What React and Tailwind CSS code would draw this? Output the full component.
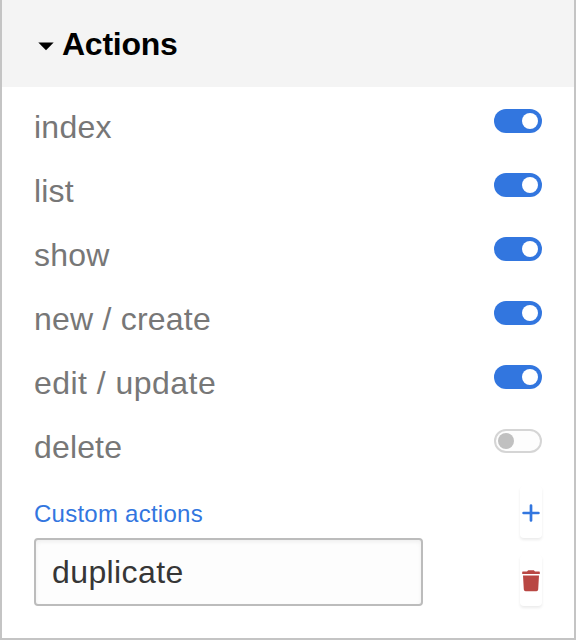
const actions = [
  { name: "index", on: true, track: "tracking-[0.25px]" },
  { name: "list", on: true, track: "tracking-[0.2px]" },
  { name: "show", on: true, track: "tracking-[0.25px]" },
  { name: "new / create", on: true, track: "tracking-[0.22px]" },
  { name: "edit / update", on: true, track: "tracking-[0.47px]" },
  { name: "delete", on: false, track: "tracking-[0.15px]" },
];

function Toggle({ on }) {
  return on ? (
    <span role="switch" aria-checked="true" className="mt-[14px] flex h-6 w-12 items-center justify-end rounded-full bg-[#3276df] pr-1">
      <span className="h-4 w-4 rounded-full bg-white" />
    </span>
  ) : (
    <span role="switch" aria-checked="false" className="mt-[14px] flex h-6 w-12 items-center rounded-full border-2 border-[#d5d5d5] bg-[#fdfdfd] pl-[2px]">
      <span className="h-4 w-4 rounded-full bg-[#c0c0c0]" />
    </span>
  );
}

export default function App() {
  return (
    <main className="flex h-[640px] w-[576px] flex-col border-x-2 border-b-2 border-[#c4c4c4] bg-white font-['Liberation_Sans',Arial,sans-serif]">
      <header className="flex h-[87px] items-center bg-[#f4f4f4] pl-9 text-black">
        <svg className="mt-[5px] h-[9px] w-4" viewBox="0 0 16 9" fill="currentColor" aria-hidden="true">
          <path d="M0.3 0.4h15.4L8 8.3z" />
        </svg>
        <h1 className="ml-2 text-[32px] leading-9 font-bold tracking-[-0.25px]">Actions</h1>
      </header>
      <ul className="px-8 pt-2">
        {actions.map(({ name, on, track }) => (
          <li key={name} className="flex h-16 items-start justify-between">
            <span className={"text-[32px] leading-[64px] text-[#777777] " + track}>{name}</span>
            <Toggle on={on} />
          </li>
        ))}
      </ul>
      <section className="flex flex-col px-8 pt-[7px]">
        <div className="flex h-[52px] items-start justify-between">
          <h2 className="mt-[14px] text-2xl leading-7 tracking-[0.25px] text-[#3276df]">Custom actions</h2>
          <button aria-label="Add" className="flex h-[52px] w-[22px] items-center justify-center rounded-[4px] bg-white pt-px shadow-[0_2px_3px_rgba(0,0,0,0.08)]">
            <svg className="h-[18px] w-[18px]" viewBox="0 0 18 18" stroke="#3276df" strokeWidth="2.7" strokeLinecap="round">
              <path d="M9 1.6v14.8M1.6 9h14.8" />
            </svg>
          </button>
        </div>
        <div className="flex items-end justify-between">
          <input aria-label="Custom action" defaultValue="duplicate" className="h-[68px] w-[389px] rounded-[4px] border-2 border-[#bcbcbc] bg-[#fdfdfd] px-4 text-[32px] leading-9 tracking-[0.4px] text-[#363636] shadow-[inset_0_2px_4px_rgba(0,0,0,0.06)]" />
          <button aria-label="Delete" className="flex h-[51px] w-[22px] items-center justify-center rounded-[4px] bg-white shadow-[0_2px_3px_rgba(0,0,0,0.08)]">
            <svg className="h-[22px] w-[18px]" viewBox="0 0 18 22" fill="#b94743">
              <path d="M0.8 1.5H5L6.2 0.3h5.6L13 1.5h4.2a.6.6 0 0 1 .6.6V4H.2V2.1a.6.6 0 0 1 .6-.6zM1 5.4h16l-.8 14.2a1.8 1.8 0 0 1-1.8 1.6H3.6a1.8 1.8 0 0 1-1.8-1.6z" />
            </svg>
          </button>
        </div>
      </section>
    </main>
  );
}
